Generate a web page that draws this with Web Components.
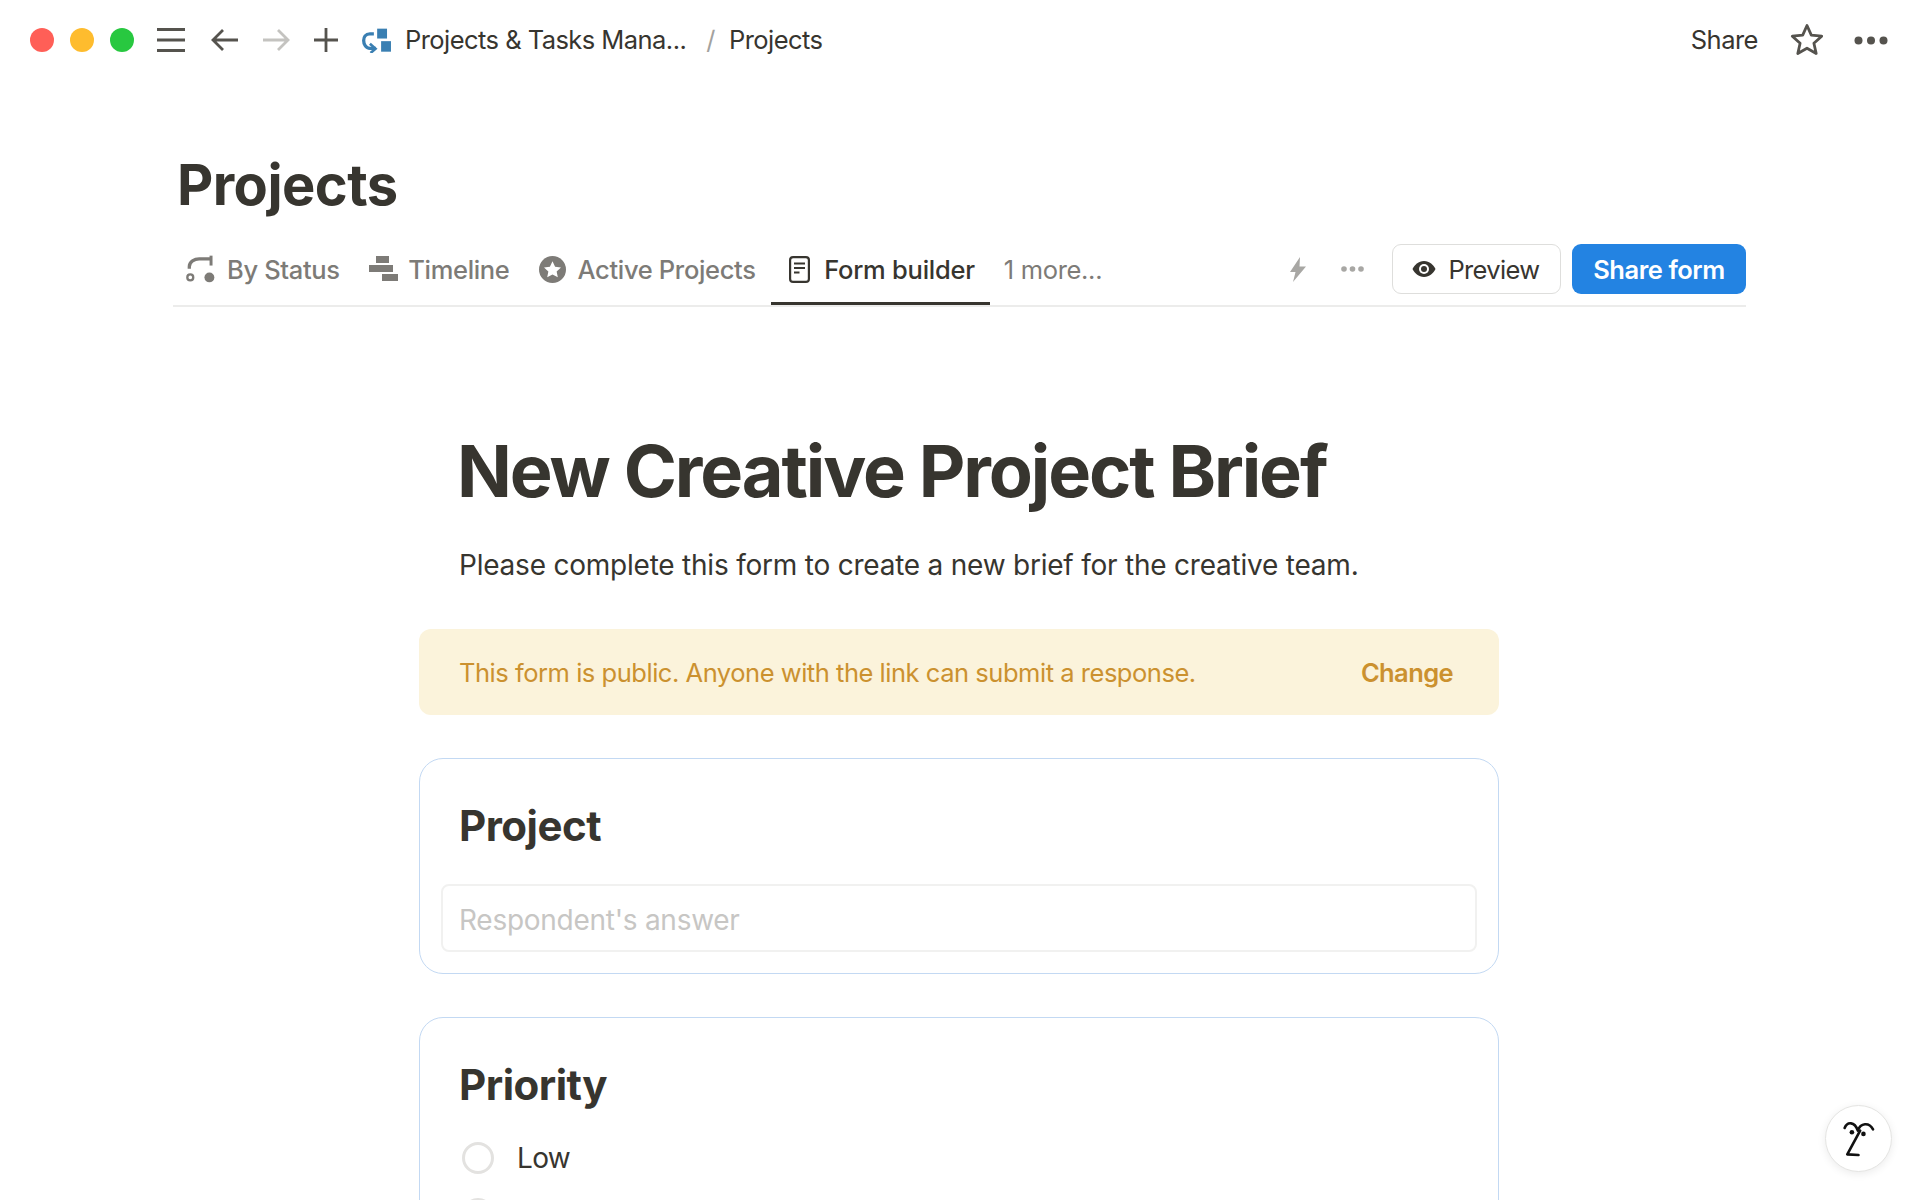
<!DOCTYPE html>
<html><head><meta charset="utf-8"><style>
html,body{margin:0;padding:0;background:#fff;height:1200px;overflow:hidden;font-family:Inter,"Liberation Sans",sans-serif;color:#37352f}
</style></head><body>
<app-shell></app-shell>
<script>
function def(name,html,css){
  customElements.define(name,class extends HTMLElement{
    constructor(){super();const r=this.attachShadow({mode:'open'});r.innerHTML='<style>'+css+'</style>'+html;}
  });
}
const I={
 star:'<svg width="36" height="36" viewBox="0 0 36 36" fill="none" stroke="#55534e" stroke-width="2.8" stroke-linejoin="round"><path d="M18 3.500l4.300 9.600 10.400 1.100-7.800 7 2.300 10.300-9.200-5.300-9.200 5.300 2.300-10.300-7.800-7 10.400-1.100z"/></svg>',
 logo:'<svg width="31" height="25" viewBox="30 20 92 76"><rect x="78" y="22" width="30" height="30" fill="#3a7fb2"/><rect x="90" y="60" width="30" height="32" fill="#3a7fb2"/><path d="M68 38H56C42 38 37 48 37 58S43 82 56 82H74" fill="none" stroke="#3a7fb2" stroke-width="10"/><path d="M56 68 73 83 58 96" fill="none" stroke="#3a7fb2" stroke-width="8"/></svg>'
};
def('traffic-lights','<i style="background:#ff5f57"></i><i style="background:#febc2e"></i><i style="background:#28c840"></i>',
 ':host{display:flex;gap:16px;align-items:center}i{display:block;width:24px;height:24px;border-radius:50%}');
def('nav-icons',`
<svg width="30" height="24" viewBox="0 0 30 24" stroke="#55534e" stroke-width="3" fill="none"><path d="M1 1.500h28M1 12h28M1 22.500h28"/></svg>
<svg class="a" width="28" height="24" viewBox="0 0 28 24" stroke="#55534e" stroke-width="2.800" fill="none"><path d="M27 12H2M12 2 2 12l10 10"/></svg>
<svg class="b" width="28" height="24" viewBox="0 0 28 24" stroke="#c4c3c0" stroke-width="2.800" fill="none"><path d="M1 12h25M16 2l10 10-10 10"/></svg>
<svg class="c" width="24" height="24" viewBox="0 0 24 24" stroke="#55534e" stroke-width="2.800" fill="none"><path d="M12 0v24M0 12h24"/></svg>`,
 ':host{display:flex;align-items:center}.a{margin-left:25px}.b{margin-left:23px}.c{margin-left:24px}');
def('bread-crumbs',`<span class="logo">${I.logo}</span><span class="t">Projects &amp; Tasks Mana...</span><span class="s">/</span><span class="t">Projects</span>`,
 ':host{display:flex;align-items:center;font-size:25.5px;letter-spacing:-.55px;color:#37352f}.logo{display:flex;margin-right:13px}.s{color:#a3a29e;margin:0 14px 0 20px}.t{white-space:nowrap;padding-bottom:2px}.s{padding-bottom:2px}');
def('top-bar',`<traffic-lights></traffic-lights><nav-icons></nav-icons><bread-crumbs></bread-crumbs><span class="sp"></span>
 <span class="share">Share</span><span class="star">${I.star}</span>
 <svg class="dots" width="34" height="9" viewBox="0 0 34 9" fill="#55534e"><circle cx="4.500" cy="4.500" r="4"/><circle cx="17" cy="4.500" r="4"/><circle cx="29.500" cy="4.500" r="4"/></svg>`,
 ':host{display:flex;align-items:center;height:80px;padding:0 32px 0 30px;box-sizing:border-box}nav-icons{margin-left:22px}bread-crumbs{margin-left:23px}.sp{flex:1}.share{font-size:25.5px;letter-spacing:-.5px;color:#37352f;padding-bottom:2px}.star{display:flex;margin-left:31px}.dots{margin-left:29px}');
def('view-tab','<slot name="icon"></slot><span><slot></slot></span>',
 ':host{display:flex;align-items:center;gap:12px;font-size:25.5px;font-weight:500;letter-spacing:-.33px;color:#7d7b77;height:58px;box-sizing:border-box;white-space:nowrap}:host([active]){color:#37352f;height:65px;align-self:flex-start;border-bottom:3px solid #37352f;padding:0 15px 4px 18.500px;gap:14px;margin-left:15px;letter-spacing:-.25px}:host([plain]){font-weight:400}');
def('preview-btn',`<svg width="24" height="18" viewBox="0 0 24 18"><path d="M12 1C6.500 1 2.500 5 .5 9c2 4 6 8 11.500 8s9.500-4 11.500-8C21.500 5 17.500 1 12 1z" fill="#37352f"/><circle cx="12" cy="9" r="5" fill="#fff"/><circle cx="12" cy="9" r="3" fill="#37352f"/></svg><span>Preview</span>`,
 ':host{display:flex;align-items:center;justify-content:center;gap:12px;width:169px;height:50px;box-sizing:border-box;border:1.500px solid #dededc;border-radius:9px;font-size:25.5px;letter-spacing:-.65px;color:#37352f;padding-right:1px}');
def('share-btn','<slot></slot>',':host{display:flex;align-items:center;justify-content:center;width:174px;height:50px;background:#2383e2;color:#fff;border-radius:9px;font-size:25.5px;letter-spacing:-.45px;font-weight:600}');
def('tab-bar',`
<view-tab style="margin-left:12px"><svg slot="icon" style="margin-right:-1px" width="31" height="28" viewBox="20 12 92 85"><circle cx="35" cy="80" r="9" fill="none" stroke="#7d7b77" stroke-width="7"/><circle cx="93" cy="80" r="15" fill="#7d7b77"/><path d="M32 54V48C32 32 48 24 62 24H96" fill="none" stroke="#7d7b77" stroke-width="10"/><path d="M98 14V44" fill="none" stroke="#7d7b77" stroke-width="9"/></svg>By Status</view-tab>
<view-tab style="margin-left:29.500px;gap:10px"><svg slot="icon" width="29" height="26" viewBox="0 0 29 26" fill="#7d7b77"><rect x="7" y="0" width="13" height="7"/><rect x="0" y="9" width="24" height="7"/><rect x="13" y="18" width="16" height="7"/></svg>Timeline</view-tab>
<view-tab style="margin-left:29px"><svg slot="icon" width="27" height="27" viewBox="0 0 28 28"><circle cx="14" cy="14" r="14" fill="#7d7b77"/><path d="M14 5.500l2.700 5.600 6.100.8-4.500 4.200 1.200 6-5.500-3-5.500 3 1.200-6-4.500-4.200 6.100-.8z" fill="#fff"/></svg>Active Projects</view-tab>
<view-tab active><svg slot="icon" width="21" height="27" viewBox="0 0 21 27" fill="none" stroke="#37352f" stroke-width="2.200"><rect x="1.100" y="1.100" width="18.800" height="24.800" rx="3"/><path d="M5 7.500h11M5 12h11M5 16.500h5.500"/></svg>Form builder</view-tab>
<view-tab plain style="margin-left:14px">1 more...</view-tab>
<span class="sp"></span>
<svg class="bolt" width="16" height="25" viewBox="0 0 16 25" fill="#a8a7a4"><path d="M10 0 0 15h5.500L3 25 16 9.500H9.500z"/></svg>
<svg class="more" width="23" height="6" viewBox="0 0 23 6" fill="#a8a7a4"><circle cx="3" cy="3" r="2.800"/><circle cx="11.500" cy="3" r="2.800"/><circle cx="20" cy="3" r="2.800"/></svg>
<preview-btn></preview-btn><share-btn>Share form</share-btn>`,
 ':host{display:flex;align-items:center;height:67px;box-sizing:border-box;border-bottom:2px solid #ececeb;padding-bottom:7px}.sp{flex:1}.bolt{margin-right:35px}.more{margin-right:28px}share-btn{margin-left:11px}');
def('form-banner','<span class="m"><slot></slot></span><span class="c">Change</span>',
 ':host{display:flex;align-items:center;justify-content:space-between;height:86px;background:#fbf3db;border-radius:12px;padding:0 46px 0 40px;box-sizing:border-box;color:#cb912f;font-size:25.5px;letter-spacing:-.47px}.c{font-weight:600;letter-spacing:-.6px}');
def('form-card','<h2><slot name="title"></slot></h2><slot></slot>',
 ':host{display:block;border:1.500px solid #c3d9f3;border-radius:24px;padding:0 21px 21px 21px;box-sizing:border-box;margin-top:43px}h2{margin:0;font-size:42px;font-weight:700;letter-spacing:-.5px;padding:42px 0 0 18px;line-height:50px;color:#37352f}');
def('answer-box','<slot></slot>',
 ':host{display:flex;align-items:center;height:68px;box-sizing:border-box;margin-top:33px;border:2px solid #f1f1f0;border-radius:8px;padding:3px 16px 0;font-size:28px;letter-spacing:-.27px;color:#c7c6c4}');
def('radio-opt','<i></i><span><slot></slot></span>',
 ':host{display:flex;align-items:center;gap:23px;font-size:28px;letter-spacing:-.7px;color:#37352f;padding-left:21px;height:56px}i{display:block;width:32px;height:32px;box-sizing:border-box;border:3px solid #e3e2e0;border-radius:50%}');
def('help-face',`<svg width="33" height="37" viewBox="190 118 100 112" fill="none" stroke="#111" stroke-width="8" stroke-linecap="round" stroke-linejoin="round"><path d="M198 142C206 122 228 122 238 150C246 126 272 124 284 146"/><path d="M245 150 206 222 240 224"/><circle cx="220" cy="155" r="7" fill="#111" stroke="none"/><circle cx="255" cy="160" r="7" fill="#111" stroke="none"/></svg>`,
 ':host{position:fixed;right:28px;bottom:28px;width:67px;height:67px;box-sizing:border-box;background:#fff;border:1.500px solid #e4e4e2;border-radius:50%;display:flex;align-items:center;justify-content:center;box-shadow:0 2px 8px rgba(15,15,15,.08)}');
def('form-page',`<h1>New Creative Project Brief</h1><p>Please complete this form to create a new brief for the creative team.</p>
<form-banner>This form is public. Anyone with the link can submit a response.</form-banner>
<form-card><span slot="title">Project</span><answer-box>Respondent's answer</answer-box></form-card>
<form-card class="two"><span slot="title">Priority</span><radio-opt>Low</radio-opt><radio-opt></radio-opt><radio-opt></radio-opt></form-card>`,
 ':host{display:block;width:1080px;margin:0 0 0 419px;padding-top:121px}h1{margin:0 0 0 38px;font-size:72px;line-height:86px;font-weight:700;letter-spacing:-2.100px;color:#37352f}p{margin:31px 0 0 40px;font-size:28px;line-height:40px;letter-spacing:-.22px;color:#37352f}form-banner{margin-top:44px}.two{padding-bottom:0}.two radio-opt:first-of-type{margin-top:20px}');
def('app-shell',`<top-bar></top-bar><div class="head"><h1>Projects</h1><tab-bar></tab-bar></div><form-page></form-page><help-face></help-face>`,
 ':host{display:block;height:1200px;overflow:hidden}.head{width:1573px;margin-left:173px}h1{margin:0 0 21px;padding:71px 0 0 4px;font-size:56px;line-height:68px;font-weight:700;letter-spacing:-.55px;color:#37352f}');
</script></body></html>
